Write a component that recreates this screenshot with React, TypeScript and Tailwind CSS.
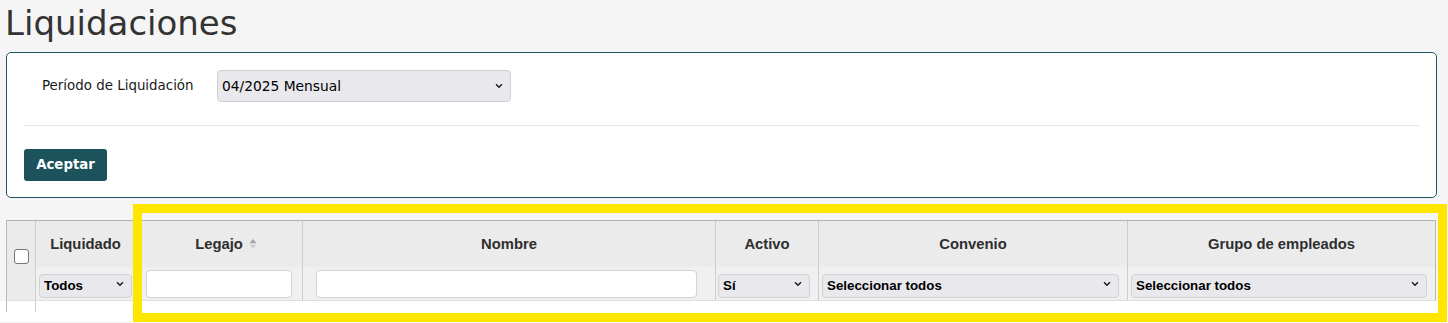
import React from 'react'

const dejavu = "font-['DejaVu_Sans',Verdana,sans-serif]"
const arial = "font-['Liberation_Sans',Arial,sans-serif]"

function Chevron() {
  return (
    <svg
      className="pointer-events-none absolute right-[8px] top-1/2 -translate-y-1/2 w-[8px] h-[5px] text-[#1a1a1a]"
      viewBox="0 0 8 5"
      fill="none"
      stroke="currentColor"
      strokeWidth={1.4}
    >
      <path d="M1 0.8l3 3 3-3" />
    </svg>
  )
}

function FilterSelect({ value, width }: { value: string; width: string }) {
  return (
    <div className={`relative h-[24px] ${width}`}>
      <select
        defaultValue={value}
        className={`appearance-none w-full h-full rounded-[4px] border border-[#d2d2d6] bg-[#e9e9ed] pl-[4px] pr-[20px] text-[13.33px] font-bold text-black outline-none ${arial}`}
      >
        <option>{value}</option>
      </select>
      <Chevron />
    </div>
  )
}

function FilterInput({ width }: { width: string }) {
  return (
    <input
      type="text"
      className={`h-[28px] rounded-[4px] border border-[#d4d4d4] bg-white outline-none ${width}`}
    />
  )
}

function SortIcon() {
  return (
    <svg className="absolute left-full top-1/2 -translate-y-1/2 ml-[6px] w-[8px] h-[11px]" viewBox="0 0 8 11">
      <path d="M4 0.5L7.5 4.8H0.5z" fill="#a3a3a3" />
      <path d="M0.5 6.2H7.5L4 10.5z" fill="#cfcfcf" />
    </svg>
  )
}

export default function App() {
  const headerCell = `flex items-center justify-center bg-[#ebebeb] border-l border-[#cdcdcd] text-[14.8px] font-bold text-[#2e2e2e] ${arial}`
  const filterCell = 'flex items-center bg-[#f0f0f0] border-l border-[#cdcdcd]'

  return (
    <div className="relative h-[323px] bg-[#f5f5f5] overflow-hidden">
      <h1 className={`pl-[5px] pt-[3px] mb-[9px] text-[34px] leading-[40px] font-normal text-[#333] ${dejavu}`}>
        Liquidaciones
      </h1>

      {/* Filtro de período */}
      <div className="ml-[6px] w-[1431px] rounded-[5px] border border-[#1f5560] bg-white px-[17px] pt-[17px] pb-[16px]">
        <div className="flex items-center h-[32px]">
          <label className={`ml-[18px] w-[175px] text-[13.4px] text-[#1a1a1a] ${dejavu}`}>Período de Liquidación</label>
          <div className="relative w-[294px] h-[32px]">
            <select
              defaultValue="04/2025 Mensual"
              className={`appearance-none w-full h-full rounded-[4px] border border-[#cfcfd4] bg-[#e9e9ed] pl-[4px] pr-[20px] text-[13.8px] text-black outline-none ${dejavu}`}
            >
              <option>04/2025 Mensual</option>
            </select>
            <Chevron />
          </div>
        </div>
        <div className="mt-[23px] border-t border-[#e6e6e6]" />
        <button className={`mt-[23px] w-[83px] h-[32px] rounded-[3px] bg-[#1b525c] text-white text-[13.33px] font-bold ${dejavu}`}>
          Aceptar
        </button>
      </div>

      {/* Tabla de empleados */}
      <div className="mt-[22px] ml-[6px] w-[1430px] border-x border-t border-b border-t-[#b3b3b3] border-x-[#b8b8b8] border-b-[#dedede] grid grid-cols-[28px_100px_167px_413px_103px_309px_308px] grid-rows-[46px_33px]">
        <div className="row-span-2 flex justify-center items-start pt-[28px] bg-[#ebebeb]">
          <input type="checkbox" className="appearance-none w-[15px] h-[15px] rounded-[3px] border border-[#767676] bg-white" />
        </div>
        <div className={headerCell}>Liquidado</div>
        <div className={headerCell}>
          <span className="relative">
            Legajo
            <SortIcon />
          </span>
        </div>
        <div className={headerCell}>Nombre</div>
        <div className={headerCell}>Activo</div>
        <div className={headerCell}>Convenio</div>
        <div className={headerCell}>Grupo de empleados</div>

        <div className={`${filterCell} pl-[3px]`}>
          <FilterSelect value="Todos" width="w-[93px]" />
        </div>
        <div className={`${filterCell} pl-[10px]`}>
          <FilterInput width="w-[146px]" />
        </div>
        <div className={`${filterCell} pl-[13px]`}>
          <FilterInput width="w-[381px]" />
        </div>
        <div className={`${filterCell} pl-[2px]`}>
          <FilterSelect value="Sí" width="w-[92px]" />
        </div>
        <div className={`${filterCell} pl-[3px]`}>
          <FilterSelect value="Seleccionar todos" width="w-[297px]" />
        </div>
        <div className={`${filterCell} pl-[3px]`}>
          <FilterSelect value="Seleccionar todos" width="w-[296px]" />
        </div>
      </div>
      <div className="bg-white h-[21px]">
        <div className="ml-[6px] w-[30px] h-[11px] border-x border-l-[#b8b8b8] border-r-[#cdcdcd]" />
      </div>

      {/* Marco resaltado */}
      <div className="absolute left-[133px] top-[204px] w-[1314px] h-[118px] border-[9px] border-[#ffe600] pointer-events-none" />
    </div>
  )
}
